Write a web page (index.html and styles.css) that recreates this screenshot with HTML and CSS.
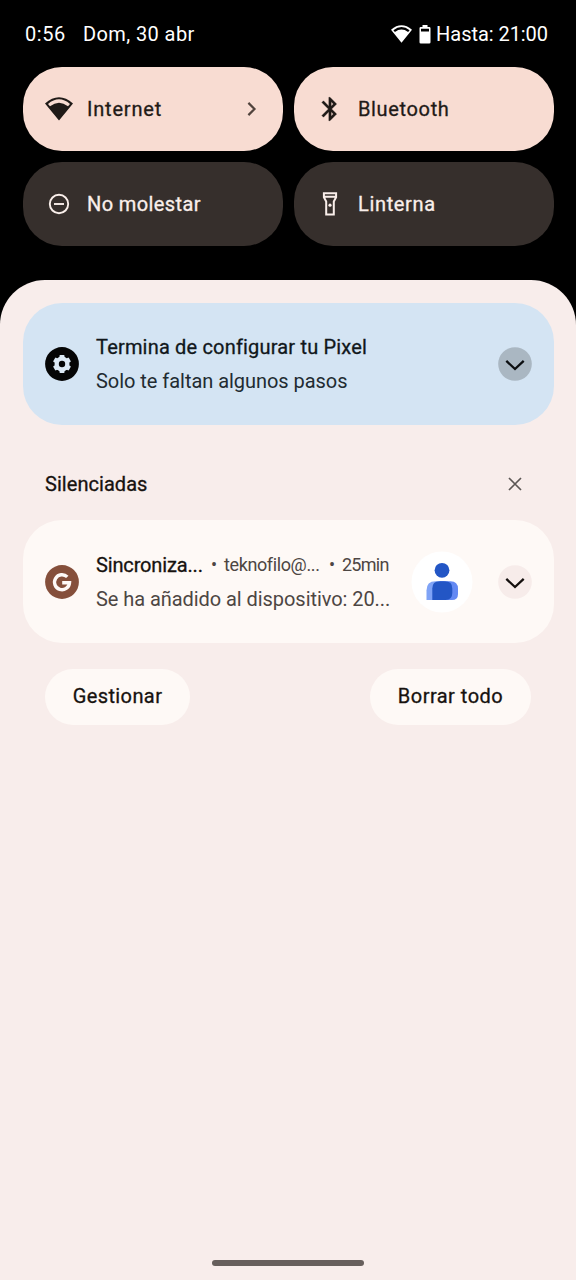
FILE: index.html
```html
<!DOCTYPE html>
<html lang="es">
<head>
<meta charset="utf-8">
<title>Notificaciones</title>
<link rel="stylesheet" href="styles.css">
</head>
<body>
<div class="screen">
  <header class="status">
    <span class="time">0:56</span>
    <span class="date">Dom, 30 abr</span>
    <svg class="status-wifi" width="21" height="18" viewBox="0 0 28 24"><path fill="#fff" fill-rule="evenodd" d="M0 6.200Q14-5.400 28 6.200L14 23.600zM3.200 7L5.200 9.200Q14 2.800 22.800 9.200L24.800 7Q14-1.600 3.200 7z"/></svg>
    <svg class="status-battery" width="12" height="19" viewBox="0 0 12 19"><path fill="#fff" fill-rule="evenodd" d="M3.500 0h5v2H10.200a1.300 1.300 0 0 1 1.300 1.300v13.900a1.300 1.300 0 0 1-1.300 1.300H1.800A1.300 1.300 0 0 1 .5 17.200V3.300A1.300 1.300 0 0 1 1.800 2h1.700zM2 3.800v2.800h8V3.800z"/></svg>
    <span class="until">Hasta: 21:00</span>
  </header>

  <section class="tiles">
    <div class="tile on">
      <svg class="tile-icon" width="28" height="28" viewBox="0 0 28 28"><path fill="currentColor" fill-rule="evenodd" d="M0 8.400Q14-3.800 28 8.400L14 25.500zM3 8.900L5 11.200Q14 4.200 23 11.200L25 8.900Q14-.4 3 8.900z"/></svg>
      <span class="tile-label internet">Internet</span>
      <svg class="tile-chevron" width="10" height="16" viewBox="0 0 10 16"><path d="M1.400 1.900L7.500 8L1.400 14.100" fill="none" stroke="#51433d" stroke-width="2.200"/></svg>
    </div>
    <div class="tile on">
      <svg class="tile-icon" width="28" height="28" viewBox="0 0 24 24"><path fill="currentColor" stroke="currentColor" stroke-width=".3" d="M17.710 7.710L12 2h-1v7.590L6.410 5L5 6.410L10.590 12L5 17.590L6.410 19L11 14.410V22h1l5.710-5.710L13.410 12zM13 5.830l1.880 1.880L13 9.590zm1.880 10.460L13 18.170v-3.760z"/></svg>
      <span class="tile-label bluetooth">Bluetooth</span>
    </div>
    <div class="tile">
      <svg class="tile-icon" width="28" height="28" viewBox="0 0 28 28" fill="none" stroke="currentColor" stroke-width="1.900"><circle cx="14" cy="14" r="9.200"/><path d="M9 14h10"/></svg>
      <span class="tile-label dnd">No molestar</span>
    </div>
    <div class="tile">
      <svg class="tile-icon" width="28" height="28" viewBox="0 0 28 28"><path fill="none" stroke="currentColor" stroke-width="2" d="M7.900 3.200h12.200v4.100l-2.300 4.300v13H10.200v-13L7.900 7.300zM7.900 6.700h12.200"/><circle cx="14" cy="15.200" r="1.600" fill="currentColor"/></svg>
      <span class="tile-label torch">Linterna</span>
    </div>
  </section>

  <main class="panel">
    <article class="card setup">
      <svg class="app-icon" width="34" height="34" viewBox="0 0 34 34"><circle cx="17" cy="17" r="16.900" fill="#050505"/><g fill="#dce9f5"><circle cx="17" cy="17" r="7.500"/><rect x="14.500" y="8" width="5" height="18" rx=".8"/><rect x="14.500" y="8" width="5" height="18" rx=".8" transform="rotate(60 17 17)"/><rect x="14.500" y="8" width="5" height="18" rx=".8" transform="rotate(120 17 17)"/></g><circle cx="17" cy="17" r="3.200" fill="#050505"/></svg>
      <div class="copy">
        <div class="title"><span class="setup-title">Termina de configurar tu Pixel</span></div>
        <div class="text setup-text">Solo te faltan algunos pasos</div>
      </div>
      <svg class="expand" width="34" height="34" viewBox="0 0 34 34"><circle cx="17" cy="17" r="16.800" fill="#aab7c2"/><path d="M8.300 13.900L17 22L25.700 13.900" fill="none" stroke="#0c0e10" stroke-width="2.300"/></svg>
    </article>

    <div class="section">
      <span class="section-label">Silenciadas</span>
      <svg width="14" height="14" viewBox="0 0 14 14"><path d="M1 1L13 13M13 1L1 13" stroke="#5c5755" stroke-width="1.700"/></svg>
    </div>

    <article class="card quiet">
      <svg class="app-icon" width="34" height="34" viewBox="0 0 34 34"><circle cx="17" cy="17" r="16.900" fill="#854f3b"/><path d="M22.300 11.900A7.500 7.500 0 1 0 24.500 17.800H17.200" fill="none" stroke="#fef9f7" stroke-width="3.400"/></svg>
      <div class="copy">
        <div class="title"><span class="sync">Sincroniza...</span><span class="dot d1">•</span><span class="meta account">teknofilo@...</span><span class="dot d2">•</span><span class="meta age">25min</span></div>
        <div class="text quiet-text">Se ha añadido al dispositivo: 20...</div>
      </div>
      <svg class="avatar" width="62" height="62" viewBox="0 0 62 62"><circle cx="31" cy="31" r="30.500" fill="#fff"/><path fill="#7fa3f6" d="M15.500 49V39.500Q15.500 30.300 24.500 30.300H33V49z"/><path fill="#6389f3" d="M29 30.300H39.500Q47 30.300 47 38V43Q47 49 41 49H29z"/><path fill="#2356c5" d="M21.300 49V37.500Q21.300 30.300 28.500 30.300H34Q41.300 30.300 41.300 37.500V42Q41.300 49 34.500 49z"/><circle cx="31" cy="19.300" r="7.400" fill="#2356c5"/></svg>
      <svg class="expand" width="34" height="34" viewBox="0 0 34 34"><circle cx="17" cy="17" r="16.800" fill="#f7ecea"/><path d="M8.300 13.900L17 22L25.700 13.900" fill="none" stroke="#15100e" stroke-width="2.300"/></svg>
    </article>

    <div class="actions">
      <span class="button manage"><span class="manage-label">Gestionar</span></span>
      <span class="button clear"><span class="clear-label">Borrar todo</span></span>
    </div>
    <div class="home-bar"></div>
  </main>
</div>
</body>
</html>
```
FILE: styles.css
```css
* { box-sizing: border-box; }
body { margin: 0; background: #000; font-family: Roboto, "Liberation Sans", sans-serif; }
svg { display: block; flex: none; }
.screen { width: 576px; height: 1280px; display: flex; flex-direction: column; overflow: hidden; background: #000; white-space: nowrap; }
.status { height: 67px; padding: 1px 28px 0 25px; display: flex; align-items: center; color: #fff; font-size: 20px; }
.time { width: 58px; letter-spacing: .6px; }
.date { letter-spacing: .4px; }
.status-wifi { margin-left: auto; }
.status-battery { margin: 0 5px 0 7px; }
.until { letter-spacing: -.05px; }
.tiles { display: grid; grid-template-columns: 260px 260px; grid-auto-rows: 84px; gap: 11.400px 11px; padding-left: 22.500px; }
.tile { display: flex; align-items: center; padding: 0 26px 0 22.500px; border-radius: 39px; background: #362f2c; color: #faefeb; }
.tile.on { background: #f8dcd2; color: #1f1a17; }
/* The hairline stroke gives a weight between regular and medium. */
.tile-label, .setup-title, .section-label, .sync, .button { -webkit-text-stroke: .3px currentColor; }
.tile-label { margin-left: 14px; font-size: 20px; letter-spacing: .8px; }
.bluetooth, .torch { letter-spacing: .65px; }
.dnd { letter-spacing: .4px; }
.tile-chevron { margin-left: auto; }
.panel { flex: 1; margin-top: 33.600px; padding: 23px 22.500px 14px; border-radius: 45px 45px 0 0; background: #f8edeb; display: flex; flex-direction: column; color: #17120f; }
.card { height: 122px; flex: none; border-radius: 39px; padding: 0 22px 0 22.500px; display: flex; align-items: center; }
.setup { background: #d4e4f3; color: #11171b; }
.quiet { background: #fef9f6; height: 123px; }
.copy { margin-left: 17px; }
.title { height: 34px; line-height: 34px; font-size: 20px; display: flex; }
.setup-title { letter-spacing: .18px; }
.text { height: 34px; line-height: 34px; font-size: 20px; }
.setup-text { color: #222b31; letter-spacing: -.04px; }
.quiet-text { color: #4d4643; letter-spacing: -.06px; }
.quiet .copy { width: 298px; }
.expand { margin-left: auto; }
.section { height: 95.300px; padding: 22.700px 32px 0 22.500px; display: flex; justify-content: space-between; align-items: center; font-size: 20px; }
.section-label { letter-spacing: .05px; }
.sync { width: 108px; letter-spacing: -.15px; }
.meta, .dot { font-size: 18px; color: #4d4643; }
.dot { width: 20px; text-align: center; }
.account { width: 98px; letter-spacing: -.38px; }
.age { letter-spacing: -.75px; }
.avatar { margin-left: 17px; }
.actions { display: flex; justify-content: space-between; padding: 0 22.500px; margin-top: 25.600px; }
.button { height: 56px; padding-bottom: 1px; border-radius: 28px; background: #fef9f6; display: flex; align-items: center; justify-content: center; font-size: 20px; letter-spacing: .4px; }
.manage { width: 145px; }
.clear { width: 161px; letter-spacing: .48px; }
.home-bar { width: 152px; height: 6px; border-radius: 3px; background: #675f5c; margin: auto auto 0; }
```
